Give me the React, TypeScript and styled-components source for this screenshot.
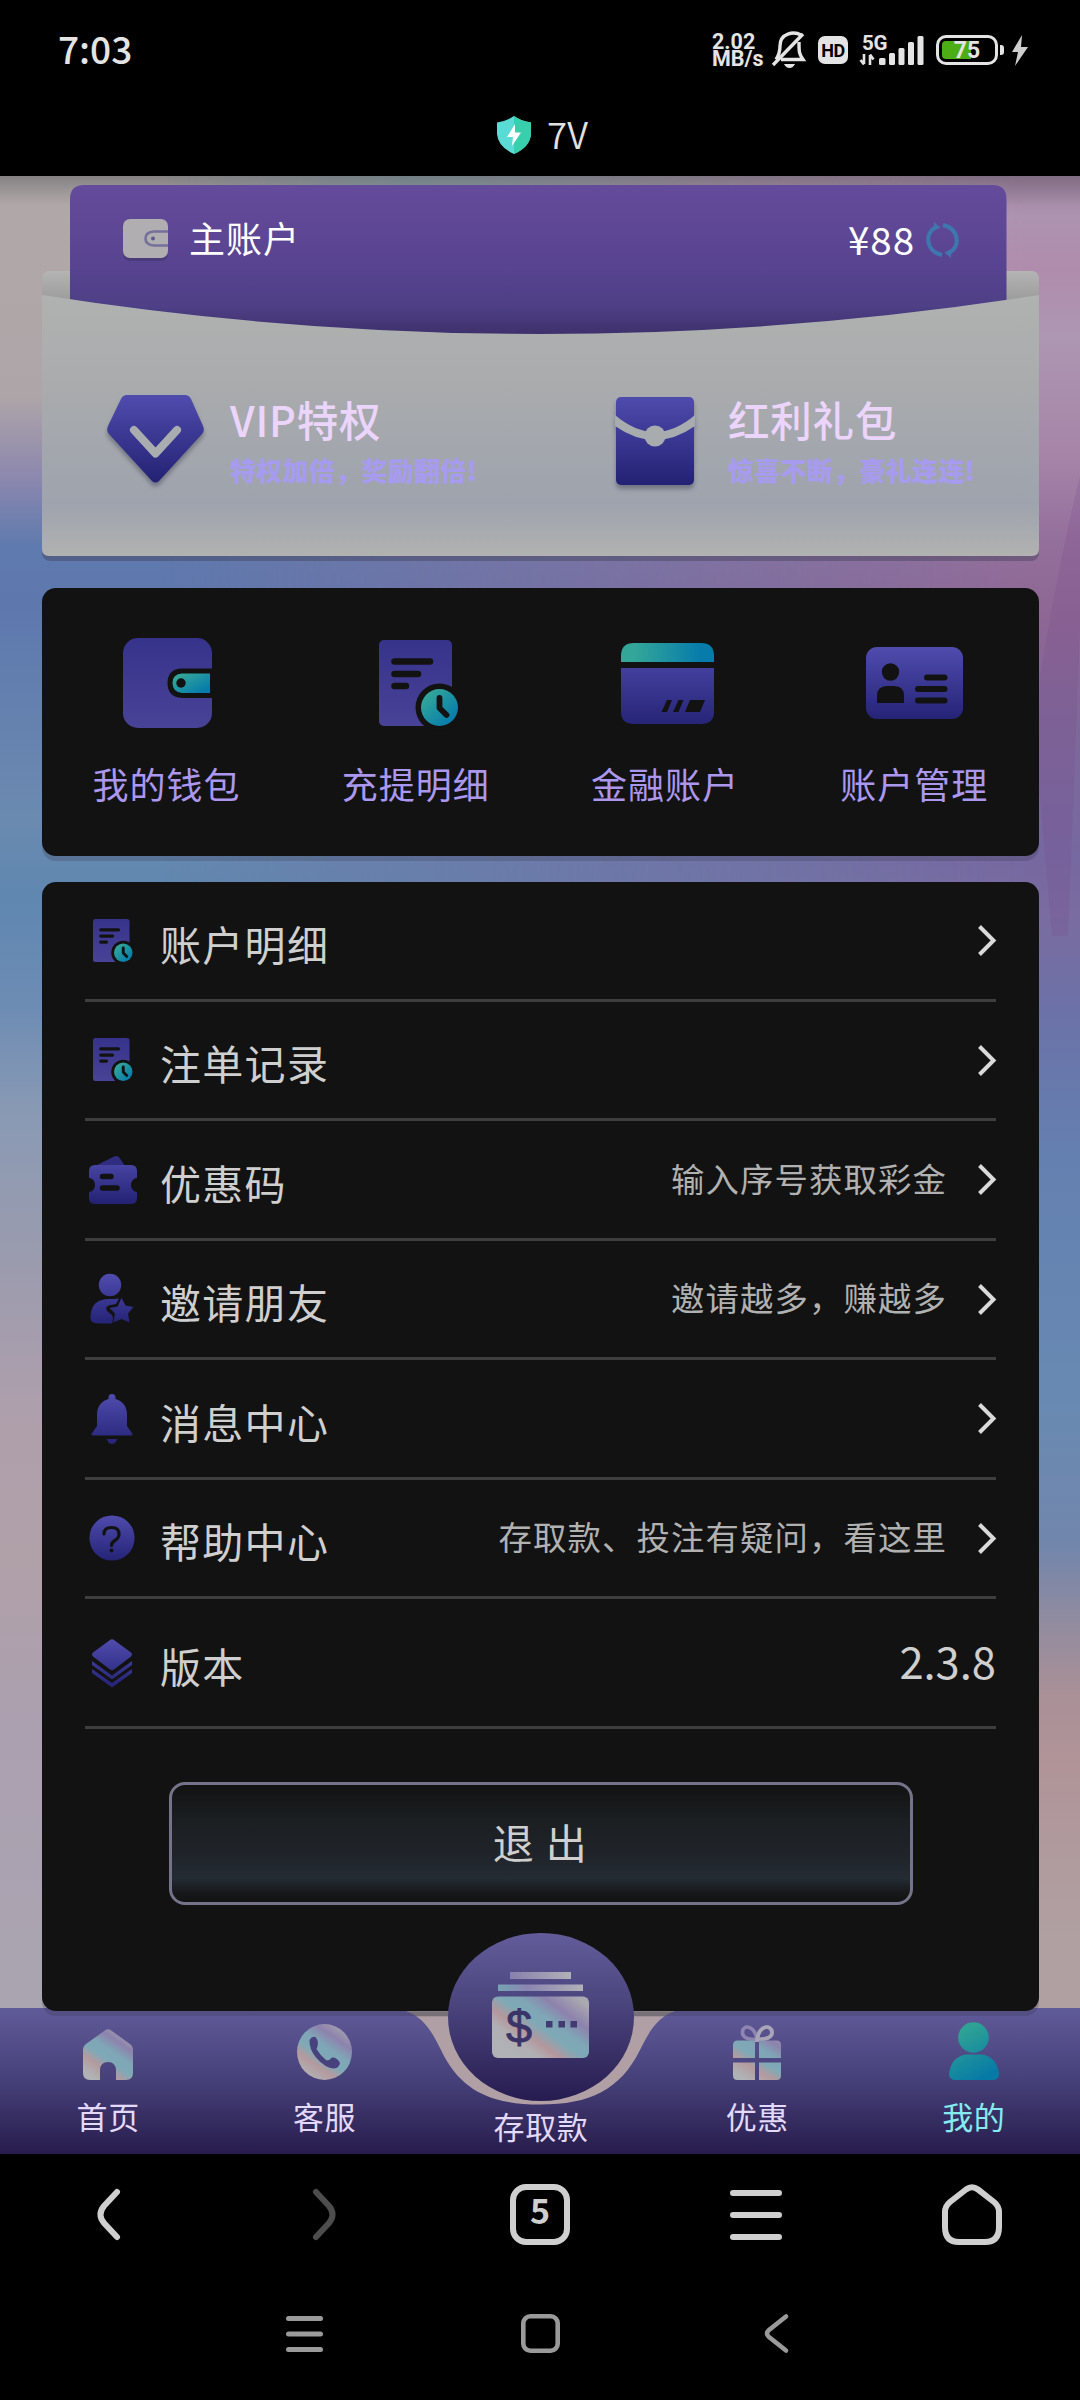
import React from "react";
import styled, { createGlobalStyle, css } from "styled-components";

const INK = "#121212";

const GlobalStyle = createGlobalStyle`
  * { box-sizing: border-box; }
  html, body { margin: 0; padding: 0; background: #000; }
  body { font-family: "Noto Sans CJK SC", "Noto Sans", sans-serif; }
  svg { display: block; flex: none; overflow: visible; }
`;

const Screen = styled.div`
  width: 1080px;
  height: 2400px;
  display: flex;
  flex-direction: column;
  background: #000;
  color: #e4e4e4;
  overflow: hidden;
`;

/* ---------- system status bar ---------- */

const StatusBar = styled.header`
  height: 100px;
  padding: 0 52px 0 58px;
  display: flex;
  align-items: center;
  justify-content: space-between;
`;

const Clock = styled.span`
  font-size: 37px;
  line-height: 50px;
  font-weight: 500;
  padding-bottom: 5px;
`;

const StatusIcons = styled.div`
  display: flex;
  align-items: center;
`;

const Speed = styled.div`
  display: flex;
  flex-direction: column;
  width: 60px;
  font-family: Roboto, sans-serif;
  font-size: 21.5px;
  line-height: 17.5px;
  font-weight: 700;
`;

const HdBadge = styled.span`
  width: 30px;
  height: 28px;
  margin: 0 12px;
  border-radius: 7px;
  background: #e4e4e4;
  color: #000;
  font-family: Roboto, sans-serif;
  font-size: 18px;
  font-weight: 700;
  letter-spacing: -0.5px;
  display: flex;
  align-items: center;
  justify-content: center;
`;

const Signal = styled.div`
  display: grid;
  width: 64px;
  margin-right: 12px;
  > * { grid-area: 1 / 1; }
`;

const Network = styled.span`
  font-family: Roboto, sans-serif;
  font-size: 20.5px;
  line-height: 16px;
  font-weight: 700;
  letter-spacing: -0.3px;
  padding-left: 2px;
`;

const Battery = styled.div`
  width: 62px;
  height: 30px;
  border: 3px solid #e4e4e4;
  border-radius: 10px;
  padding: 3px;
  background: #000;
`;

const Charge = styled.div<{ $level: number }>`
  height: 100%;
  border-radius: 4px;
  background: linear-gradient(90deg, #4cae14 ${(p) => p.$level}%, transparent ${(p) => p.$level}%);
  font-family: Roboto, sans-serif;
  font-size: 23px;
  line-height: 19px;
  font-weight: 700;
  text-align: center;
`;

const BatteryTip = styled.i`
  width: 4px;
  height: 10px;
  margin: 0 7px 0 2px;
  border-radius: 0 3px 3px 0;
  background: #e4e4e4;
`;

const AddressBar = styled.div`
  height: 76px;
  display: flex;
  justify-content: center;
  gap: 16px;
  padding: 16px 0 0 5px;
`;

const SiteName = styled.span`
  font-size: 36.5px;
  line-height: 36px;
  font-weight: 350;
  color: #e2e2e2;
`;

/* ---------- web page ---------- */

const Page = styled.main`
  position: relative;
  height: 1978px;
  padding: 9px 41px 0 42px;
  isolation: isolate;
  overflow: hidden;
  background: linear-gradient(
    #a5a09e 0, #b0a8a8 20px, #aea5a8 220px, #8d88ae 300px, #5f7aae 370px, #5e78ae 430px,
    #6b8ab0 640px, #5f87b0 720px, #6d8cb4 830px, #8a9ab4 940px, #9a9bae 1080px,
    #ae9fac 1230px, #b0a0a8 1380px, #aba0b0 1560px, #aaa5b0 1860px, #a9a5b0 100%
  );
  &::before {
    content: "";
    position: absolute;
    inset: 0;
    z-index: -2;
    background: linear-gradient(
      #9d819d 0, #ad93b0 40px, #b08cac 95px, #ad97b2 160px, #a684a8 280px, #94709c 360px,
      #8e6794 440px, #7f6899 540px, #7668a0 680px, #7a6ca0 740px, #6b72a8 840px,
      #6480b0 980px, #688ab2 1220px, #7286ac 1370px, #8f8ba0 1440px, #aa9097 1520px,
      #b09498 1590px, #b0a0a2 1760px, #b0a0a2 100%
    );
    mask-image: linear-gradient(90deg, transparent 15%, #000 95%);
  }
  &::after {
    content: "";
    position: absolute;
    inset: 0 0 auto;
    height: 30px;
    z-index: -2;
    background: linear-gradient(rgba(60, 60, 70, 0.3), rgba(60, 60, 70, 0)),
      linear-gradient(90deg, transparent 15%, rgba(110, 160, 160, 0.5) 38%, transparent 70%);
  }
`;

const RightFacets = styled.svg`
  position: absolute;
  right: 0;
  top: 300px;
  z-index: -1;
`;

const panel = css`
  border-radius: 14px;
  background: ${INK};
  box-shadow: 0 5px 0 rgba(50, 50, 70, 0.25);
`;

const Wallet = styled.section`
  position: relative;
  height: 371px;
  display: flex;
  flex-direction: column;
`;

const EnvelopeArt = styled.svg`
  position: absolute;
  inset: 0;
  z-index: -1;
`;

const Account = styled.div`
  height: 72px;
  margin: 19px 80px 0 81px;
  display: flex;
  align-items: center;
`;

const AccountName = styled.span`
  margin: 0 auto 0 21px;
  padding-bottom: 7px;
  font-size: 36px;
  line-height: 46px;
  font-weight: 400;
  letter-spacing: 1px;
  color: #fff;
`;

const Balance = styled.span`
  margin-right: 11px;
  padding-bottom: 4px;
  font-size: 38.5px;
  line-height: 46px;
  letter-spacing: 1px;
  color: #fff;
`;

const Perks = styled.div`
  display: grid;
  grid-template-columns: 498px 1fr;
  margin-top: 113px;
`;

const Perk = styled.div`
  display: flex;
  padding-left: 65px;
`;

const PerkIcon = styled.div<{ $shift?: number }>`
  width: 97px;
  height: 96px;
  margin: 6px 26px 0 0;
  padding-left: ${(p) => p.$shift || 0}px;
  display: flex;
  justify-content: center;
  filter: drop-shadow(0 4px 2px rgba(60, 60, 80, 0.45));
`;

const PerkTitle = styled.div`
  font-size: 41.5px;
  line-height: 60px;
  font-weight: 500;
  letter-spacing: 0.8px;
  color: #ecd5fb;
`;

const PerkNote = styled.div`
  font-size: 26px;
  line-height: 36px;
  font-weight: 900;
  letter-spacing: 0.3px;
  white-space: nowrap;
  color: #a79bef;
  margin-top: 3px;
`;

const Shortcuts = styled.nav`
  ${panel}
  height: 268px;
  margin-top: 32px;
  display: grid;
  grid-template-columns: repeat(4, 1fr);
`;

const Shortcut = styled.a`
  display: flex;
  flex-direction: column;
  align-items: center;
  color: #ab98ee;
  font-size: 36px;
  line-height: 50px;
  letter-spacing: 1px;
  white-space: nowrap;
`;

const ShortcutIcon = styled.div<{ $shift: number }>`
  height: 170px;
  padding: 20px 0 0 ${(p) => p.$shift}px;
  display: flex;
  align-items: center;
`;

const MenuPanel = styled.section`
  ${panel}
  height: 1129px;
  margin-top: 26px;
  padding: 0 43px;
  display: flex;
  flex-direction: column;
  align-items: center;
`;

const MenuRow = styled.div<{ $height: number }>`
  width: 100%;
  height: ${(p) => p.$height}px;
  border-bottom: 3px solid #3e3e3e;
  display: flex;
  align-items: center;
`;

const MenuIcon = styled.div<{ $shift?: number }>`
  width: 54px;
  margin-right: 21px;
  padding-left: ${(p) => p.$shift || 0}px;
  display: flex;
  justify-content: center;
`;

const MenuLabel = styled.span`
  margin-right: auto;
  padding-top: 4px;
  font-size: 41px;
  line-height: 60px;
  letter-spacing: 1.3px;
  color: #cfcfcf;
`;

const MenuHint = styled.span`
  margin-right: 31px;
  padding-bottom: 4px;
  font-size: 33.4px;
  line-height: 50px;
  letter-spacing: 1.1px;
  color: #b1b1b1;
`;

const Version = styled.span`
  font-size: 43.5px;
  line-height: 60px;
  padding-bottom: 3px;
  color: #cfcfcf;
`;

const LogoutButton = styled.button`
  width: 744px;
  height: 123px;
  margin-top: 53px;
  padding: 0 0 5px;
  border: 3px solid #747389;
  border-radius: 16px;
  background: linear-gradient(#121212 0%, #1b1f22 30%, #20242a 60%, #232b33 80%, #17181a 92%, #121212 100%);
  font: 400 41px/60px "Noto Sans CJK SC", sans-serif;
  letter-spacing: 1.5px;
  color: #cfcfcf;
`;

/* ---------- site tab bar ---------- */

const TabBar = styled.nav`
  position: absolute;
  left: 0;
  right: 0;
  bottom: 0;
  height: 146px;
  display: grid;
  grid-template-columns: repeat(5, 216.4px);
`;

const TabBackdrop = styled.svg`
  position: absolute;
  left: 0;
  bottom: 0;
  z-index: -1;
`;

const Tab = styled.a<{ $active?: boolean }>`
  display: flex;
  flex-direction: column;
  align-items: center;
  font-size: 31px;
  line-height: 44px;
  letter-spacing: 0.6px;
  color: ${(p) => (p.$active ? "#86ebee" : "#e2d9fb")};
`;

const TabIcon = styled.div`
  height: 86px;
  padding-bottom: 14px;
  display: flex;
  align-items: flex-end;
`;

const CenterLabel = styled.span`
  margin-top: 96px;
`;

const DepositBadge = styled.div`
  position: absolute;
  left: 448px;
  top: -75px;
  width: 186px;
  height: 168px;
  border-radius: 50%;
  background: linear-gradient(#625c9a, #4c467f 40%, #271c50);
  display: flex;
  justify-content: center;
  padding: 39px 1px 0 0;
`;

/* ---------- browser + system navigation ---------- */

const BrowserBar = styled.nav`
  height: 121px;
  display: grid;
  grid-template-columns: repeat(5, 216px);
  place-items: center;
  color: #cfcfcf;
`;

const TabCount = styled.span`
  width: 60px;
  height: 61px;
  border: 6px solid currentColor;
  border-radius: 16px;
  display: flex;
  align-items: center;
  justify-content: center;
  padding-bottom: 9px;
  font-size: 34px;
  font-weight: 700;
  line-height: 38px;
`;

const SystemNav = styled.nav`
  flex: 1;
  display: grid;
  grid-template-columns: repeat(3, 236px);
  justify-content: center;
  place-items: center;
  padding-bottom: 8px;
  color: #9a9a9a;
`;

/* ---------- icons ---------- */

const Violet = ({ id, h }: { id: string; h: number }) => (
  <linearGradient id={id} gradientUnits="userSpaceOnUse" x1="0" y1="0" x2="0" y2={h}>
    <stop offset="0" stopColor="#4f4cae" />
    <stop offset="1" stopColor="#232173" />
  </linearGradient>
);

const Dusk = ({ id, h }: { id: string; h: number }) => (
  <linearGradient id={id} gradientUnits="userSpaceOnUse" x1="0" y1="0" x2="0" y2={h}>
    <stop offset="0" stopColor="#36338b" />
    <stop offset="1" stopColor="#494397" />
  </linearGradient>
);

const Teal = ({ id, flat }: { id: string; flat?: boolean }) => (
  <linearGradient id={id} x1="0" y1="0" x2="1" y2={flat ? 0 : 1}>
    <stop offset="0.15" stopColor="#33a699" />
    <stop offset="0.85" stopColor="#077cab" />
  </linearGradient>
);

const Holo = ({ id, w, h }: { id: string; w: number; h: number }) => (
  <linearGradient id={id} gradientUnits="userSpaceOnUse" x1={w * 0.15} y1={h} x2={w * 0.85} y2="0">
    <stop offset="0.06" stopColor="#b0b2b5" />
    <stop offset="0.27" stopColor="#b49a9f" />
    <stop offset="0.42" stopColor="#7fa9b6" />
    <stop offset="0.58" stopColor="#7fa6b6" />
    <stop offset="0.76" stopColor="#8d82ad" />
    <stop offset="0.95" stopColor="#a5a3ae" />
  </linearGradient>
);

const BellOff = () => (
  <svg width="34" height="36" viewBox="0 0 34 36" fill="none" stroke="#e4e4e4" strokeWidth="3.4">
    <path d="M29 3 C22 -1 8 1 8 14 C8 20 7 23 4 27.500" />
    <path d="M9 27.500 H31 C27 22 27 20 27 10" />
    <path d="M1 33 L31 2" />
    <path d="M12 32 H23 Q21 36 17.500 36 T12 32Z" fill="#e4e4e4" stroke="none" />
  </svg>
);

const SignalBars = () => (
  <svg width="64" height="30" viewBox="0 0 64 30" fill="#e4e4e4">
    <path d="M4 19 V29 M0.500 25 L4 29.500 M10 30 V20 M13.500 24.500 L10 19.500" stroke="#e4e4e4" strokeWidth="2.600" fill="none" />
    <rect x="19" y="23" width="6.500" height="7" rx="1.500" />
    <rect x="29" y="18" width="6" height="12" rx="1.500" />
    <rect x="38.500" y="13" width="6" height="17" rx="1.500" />
    <rect x="48" y="7" width="6" height="23" rx="1.500" />
    <rect x="57.500" y="1" width="6" height="29" rx="1.500" />
  </svg>
);

const Bolt = () => (
  <svg width="17" height="31" viewBox="0 0 17 31">
    <path d="M11 0 L1 17 H7 L4 31 L17 12 H10 Z" fill="#cfcfcf" />
  </svg>
);

const Shield = () => (
  <svg width="34" height="38" viewBox="0 0 34 38">
    <path d="M17 0 Q24 5 34 6.500 V18 Q33 31 17 38 Q1 31 0 18 V6.500 Q10 5 17 0Z" fill="#5adbd6" />
    <path d="M17 0 Q24 5 34 6.500 V18 Q33 31 17 38Z" fill="#38cfac" />
    <path d="M18 8 L10 21 H16 L15 30 L24 16.500 H18 Z" fill="#fff" />
  </svg>
);

const PurseIcon = () => (
  <svg width="45" height="42" viewBox="0 0 45 42">
    <rect y="3" width="45" height="39" rx="7" fill="#4a3c79" />
    <rect width="45" height="39" rx="7" fill="#b1aeb1" />
    <path d="M45 12.500 H31 Q22.500 13 22.500 19.500 T31 26.500 H45" fill="none" stroke="#75709a" strokeWidth="2.600" />
    <circle cx="30" cy="19.500" r="2" fill="#615a88" />
  </svg>
);

const RefreshIcon = () => (
  <svg width="33" height="36" viewBox="0 0 33 36" fill="none" stroke="#3f76ad" strokeWidth="4">
    <path d="M9 5.500 C-1 11 -1 29 16 33" />
    <path d="M24 30.500 C34 25 34 7 17 3" />
    <path d="M8 0 L14.500 5.500 L8 9Z M25 36 L18.500 30.500 L25 27Z" fill="#3f76ad" stroke="none" />
  </svg>
);

const VipIcon = () => (
  <svg width="97" height="88" viewBox="0 0 97 88">
    <defs><Violet id="vip" h={88} /></defs>
    <path d="M20 0 H78 Q82 0 84 4 L96 31 Q98 36 95 39 L52 86 Q48.500 89 45 86 L2 39 Q-1 36 1 31 L14 4 Q16 0 20 0Z" fill="url(#vip)" />
    <path d="M27 35 L48.500 58.500 L70 35" fill="none" stroke="#aaadaf" strokeWidth="8" strokeLinecap="round" strokeLinejoin="round" />
  </svg>
);

const PacketIcon = () => (
  <svg width="78" height="90" viewBox="0 0 78 90">
    <defs><Violet id="packet" h={90} /></defs>
    <rect y="2" width="78" height="88" rx="5" fill="url(#packet)" />
    <path d="M-1 20 Q39 54 79 20 V31 Q39 59 -1 31Z" fill="#a9acae" />
    <circle cx="39" cy="41" r="10.500" fill="#a9acae" />
  </svg>
);

const WalletIcon = () => (
  <svg width="89" height="90" viewBox="0 0 89 90">
    <defs><Dusk id="wal" h={90} /><Teal id="walTeal" /></defs>
    <rect width="89" height="90" rx="15" fill="url(#wal)" />
    <path d="M90 30.500 H59 Q44.500 31 44.500 45 T59 60 H90Z" fill={INK} />
    <path d="M87 35.500 H59 Q49.500 36 49.500 45 T59 55 H87Z" fill="url(#walTeal)" />
    <circle cx="58" cy="45" r="4.700" fill={INK} />
  </svg>
);

const StatementIcon = ({ id, scale = 1 }: { id: string; scale?: number }) => (
  <svg width={80 * scale} height={87 * scale} viewBox="0 0 80 87">
    <defs><Dusk id={id} h={87} /><Teal id={id + "Teal"} /></defs>
    <rect width="73" height="86" rx="5" fill={`url(#${id})`} />
    <path d="M15.500 21.500 H51 M15.500 34 H39 M15.500 46 H27" stroke={INK} strokeWidth="6.500" strokeLinecap="round" />
    <circle cx="60.500" cy="67.500" r="24" fill={INK} />
    <circle cx="60.500" cy="67.500" r="18.500" fill={`url(#${id}Teal)`} />
    <path d="M60.500 58 V68 L67.500 75" fill="none" stroke={INK} strokeWidth="5.800" strokeLinecap="round" strokeLinejoin="round" />
  </svg>
);

const CardIcon = () => (
  <svg width="93" height="81" viewBox="0 0 93 81">
    <defs><Violet id="bank" h={88} /><Teal id="bankTeal" flat /></defs>
    <path d="M0 19 V13 Q0 0 13 0 H80 Q93 0 93 13 V19Z" fill="url(#bankTeal)" />
    <path d="M0 25 H93 V69 Q93 81 80 81 H13 Q0 81 0 69Z" fill="url(#bank)" />
    <path d="M46 57 H51 L46 69 H40.500Z M57.500 57 H62.500 L57.500 69 H52Z M69 57 H84 L79 69 H64Z" fill={INK} />
  </svg>
);

const IdIcon = () => (
  <svg width="97" height="72" viewBox="0 0 97 72">
    <defs><Violet id="idc" h={76} /></defs>
    <rect width="97" height="72" rx="11" fill="url(#idc)" />
    <circle cx="24.500" cy="25" r="8.700" fill={INK} />
    <path d="M11 56 V49 Q11 39 21 39 H28 Q38 39 38 49 V56Z" fill={INK} />
    <path d="M61 30.500 H78.500 M52 42 H78.500 M52 53.500 H78.500" stroke={INK} strokeWidth="6" strokeLinecap="round" />
  </svg>
);

const CouponIcon = () => (
  <svg width="48" height="48" viewBox="0 0 48 48">
    <defs><Violet id="cou" h={48} /></defs>
    <path d="M8 9 L25 0.500 Q29 -1 31 2.500 L36 10 Z" fill="#302d80" />
    <path d="M6 9 H42 Q48 9 48 15 V22 C40 23 40 35 48 36 V42 Q48 48 42 48 H6 Q0 48 0 42 V36 C8 35 8 23 0 22 V15 Q0 9 6 9Z" fill="url(#cou)" />
    <path d="M13.500 20.500 H22 M13.500 32 H28" stroke={INK} strokeWidth="5.500" strokeLinecap="round" />
  </svg>
);

const InviteIcon = () => (
  <svg width="44" height="50" viewBox="0 0 44 50">
    <defs><Violet id="inv" h={52} /></defs>
    <circle cx="20" cy="11" r="11.200" fill="url(#inv)" />
    <path d="M19 25 Q1 25 0.500 43 Q0 49.500 8 49.500 H22 Q24 45 22 41 L17 37 Q14 32 21 31 L26 30 L29 24.500 Q24 25 19 25Z" fill="url(#inv)" />
    <path d="M31.500 24 L35.500 31.500 L43.500 33 L38 39.500 L39.500 48.500 L31.500 45 L23.500 48.500 L25 39.500 L19.500 34 L27.500 32.500Z" fill="url(#inv)" strokeLinejoin="round" />
  </svg>
);

const BellIcon = () => (
  <svg width="42" height="50" viewBox="0 0 42 50">
    <defs><Violet id="bell" h={54} /></defs>
    <path d="M17.500 5 Q17 0 21 0 T24.500 5 Q36 8.500 36 21 V32 L41.500 40 Q41.500 41.500 40 41.500 H2 Q0.500 41.500 0.500 40 L6 32 V21 Q6 8.500 17.500 5Z" fill="url(#bell)" />
    <path d="M16 45 H26 Q25 50 21 50 T16 45Z" fill="url(#bell)" />
  </svg>
);

const HelpIcon = () => (
  <svg width="46" height="46" viewBox="0 0 46 46">
    <defs><Violet id="help" h={48} /></defs>
    <circle cx="23" cy="23" r="22.600" fill="url(#help)" />
    <path d="M15 19 Q15 12.500 22.500 12.500 T30 19 Q30 23 26 25.500 Q22.500 27.500 22.500 30.500" fill="none" stroke={INK} strokeWidth="3.200" strokeLinecap="round" />
    <circle cx="22.500" cy="35.500" r="1.900" fill={INK} />
  </svg>
);

const LayersIcon = () => (
  <svg width="40" height="48" viewBox="0 0 40 48">
    <defs><Violet id="lay" h={50} /></defs>
    <path d="M18 1 Q20 -0.500 22 1 L39 13.500 Q41 15.500 39 17.500 L22 30.500 Q20 32 18 30.500 L1 17.500 Q-1 15.500 1 13.500Z" fill="url(#lay)" />
    <path d="M0 22 L20 36.500 L40 22 V26 L20 40.500 L0 26Z" fill="url(#lay)" />
    <path d="M0 30 L20 44 L40 30 V34 L20 48.500 L0 34Z" fill="url(#lay)" />
  </svg>
);

const RowChevron = () => (
  <svg width="18" height="31" viewBox="0 0 18 31">
    <path d="M1.500 1.500 L15.500 15.500 L1.500 29.500" fill="none" stroke="#dadada" strokeWidth="4" />
  </svg>
);

const HomeTabIcon = () => (
  <svg width="50" height="51" viewBox="0 0 50 51">
    <defs><Holo id="homeH" w={50} h={51} /></defs>
    <path d="M22.500 1 Q25 -0.500 27.500 1 L47 15 Q50 17 50 20 V44 Q50 51 43 51 H33 V41 Q32.500 33 25 33 T17 41 V51 H7 Q0 51 0 44 V20 Q0 17 3 15Z" fill="url(#homeH)" />
  </svg>
);

const PhoneTabIcon = () => (
  <svg width="55" height="56" viewBox="0 0 55 56">
    <defs><Holo id="phoneH" w={55} h={56} /></defs>
    <ellipse cx="27.500" cy="28" rx="27.500" ry="28" fill="url(#phoneH)" />
    <path d="M12.500 16 Q15 12 18.500 13 Q21 16 21 19 Q21 22 19.500 25 Q23 31 29 36 Q32 37 35 33.500 Q40 33 43 39 Q42 44 37 44.500 Q28 44 19 33.500 Q12 25 12.500 16Z" fill="#47427d" />
  </svg>
);

const GiftTabIcon = () => (
  <svg width="48" height="55" viewBox="0 0 48 55">
    <defs><Holo id="giftH" w={48} h={55} /></defs>
    <path d="M24 15 C18 14 9 14 9.500 7 C10 -1 22 0 24 15 C26 0 38 -1 39 7 C39.500 14 30 14 24 15Z" fill="none" stroke="#8e86b0" strokeWidth="3.600" />
    <path d="M24 15 C26 0 38 -1 39 7 C39.500 14 30 14 24 15Z" fill="none" stroke="#a9a5b6" strokeWidth="3.600" />
    <path d="M0 33 V20 Q0 15.500 4.500 15.500 H22 V33Z M26 33 V15.500 H43.500 Q48 15.500 48 20 V33Z M0 37.500 H22 V55 H4.500 Q0 55 0 50.500Z M26 37.500 H48 V50.500 Q48 55 43.500 55 H26Z" fill="url(#giftH)" />
  </svg>
);

const UserTabIcon = () => (
  <svg width="50" height="58" viewBox="0 0 50 58">
    <defs>
      <linearGradient id="userG" gradientUnits="userSpaceOnUse" x1="10" y1="4" x2="38" y2="54">
        <stop offset="0.1" stopColor="#2fa295" />
        <stop offset="1" stopColor="#067aa6" />
      </linearGradient>
    </defs>
    <circle cx="24.500" cy="15.500" r="15.300" fill="url(#userG)" />
    <path d="M17 32.500 H33 Q48 35 50 52 Q50 58 43 58 H7 Q0 58 0 52 Q2 35 17 32.500Z" fill="url(#userG)" />
  </svg>
);

const DepositIcon = () => (
  <svg width="97" height="86" viewBox="0 0 97 86">
    <defs>
      <linearGradient id="depA"><stop offset="0" stopColor="#8680ad" /><stop offset="1" stopColor="#b2b0b8" /></linearGradient>
      <linearGradient id="depB"><stop offset="0" stopColor="#75a4b4" /><stop offset="0.35" stopColor="#8b86b2" /><stop offset="1" stopColor="#b2b0b8" /></linearGradient>
      <linearGradient id="depC" gradientUnits="userSpaceOnUse" x1="22" y1="94" x2="77" y2="18">
        <stop offset="0.1" stopColor="#b0b2b5" />
        <stop offset="0.24" stopColor="#b0aeb2" />
        <stop offset="0.36" stopColor="#b4979d" />
        <stop offset="0.5" stopColor="#7fa9b6" />
        <stop offset="0.62" stopColor="#7fa6b6" />
        <stop offset="0.78" stopColor="#8d82ad" />
        <stop offset="0.98" stopColor="#aaa8b0" />
      </linearGradient>
    </defs>
    <rect x="18" y="0" width="61" height="7" fill="url(#depA)" />
    <rect x="6" y="12.500" width="85" height="6.500" fill="url(#depB)" />
    <rect x="0" y="24.500" width="97" height="61.500" rx="6" fill="url(#depC)" />
    <text x="27" y="70.500" textAnchor="middle" fontFamily="Liberation Sans, sans-serif" fontSize="47" fill="#3b3469" stroke="#3b3469" strokeWidth="0.8">$</text>
    <path d="M54 49 h6.500 v6.500 h-6.500Z M66.500 49 h6.500 v6.500 h-6.500Z M78.500 49 h6.500 v6.500 h-6.500Z" fill="#423b72" />
  </svg>
);

const Angle = ({ flip, color }: { flip?: boolean; color?: string }) => (
  <svg width="23" height="51" viewBox="0 0 23 51">
    <path
      d={flip ? "M3 3 L16 17 Q23 25.500 16 34 L3 48" : "M20 3 L7 17 Q0 25.500 7 34 L20 48"}
      fill="none" stroke={color || "currentColor"} strokeWidth="6" strokeLinecap="round"
    />
  </svg>
);

const Burger = ({ w, h, t }: { w: number; h: number; t: number }) => (
  <svg width={w} height={h} viewBox={`0 0 ${w} ${h}`}>
    <path d={`M${t / 2} ${t / 2} H${w - t / 2} M${t / 2} ${h / 2} H${w - t / 2} M${t / 2} ${h - t / 2} H${w - t / 2}`} stroke="currentColor" strokeWidth={t} strokeLinecap="round" />
  </svg>
);

const HomeOutline = () => (
  <svg width="60" height="61" viewBox="0 0 60 61">
    <path d="M24 5.500 Q30 1 36 5.500 L52 18 Q57 22 57 28 V43 Q57 58 43 58 H17 Q3 58 3 43 V28 Q3 22 8 18Z" fill="none" stroke="currentColor" strokeWidth="6" />
  </svg>
);

const RecentSquare = () => (
  <svg width="39" height="39" viewBox="0 0 39 39">
    <rect x="2.300" y="2.300" width="34.400" height="34.400" rx="7" fill="none" stroke="currentColor" strokeWidth="4.600" />
  </svg>
);

const BackThin = () => (
  <svg width="24" height="39" viewBox="0 0 24 39">
    <path d="M22 2.500 L5 16 Q1 19.500 5 23 L22 36.500" fill="none" stroke="currentColor" strokeWidth="4.600" strokeLinecap="round" />
  </svg>
);

/* ---------- content ---------- */

const shortcuts = [
  { label: "我的钱包", icon: <WalletIcon />, shift: 2 },
  { label: "充提明细", icon: <StatementIcon id="stm" />, shift: 7 },
  { label: "金融账户", icon: <CardIcon />, shift: 5 },
  { label: "账户管理", icon: <IdIcon />, shift: 0 },
];

const rows = [
  { label: "账户明细", icon: <StatementIcon id="row1" scale={0.5} />, shift: 2, height: 120 },
  { label: "注单记录", icon: <StatementIcon id="row2" scale={0.5} />, shift: 2, height: 119 },
  { label: "优惠码", icon: <CouponIcon />, shift: 2, hint: "输入序号获取彩金", height: 120 },
  { label: "邀请朋友", icon: <InviteIcon />, shift: 0, hint: "邀请越多，赚越多", height: 119 },
  { label: "消息中心", icon: <BellIcon />, shift: 0, height: 120 },
  { label: "帮助中心", icon: <HelpIcon />, shift: 0, hint: "存取款、投注有疑问，看这里", height: 119 },
];

export default function App() {
  return (
    <Screen>
      <GlobalStyle />
      <StatusBar>
        <Clock>7:03</Clock>
        <StatusIcons>
          <Speed><span>2.02</span><span>MB/s</span></Speed>
          <BellOff />
          <HdBadge>HD</HdBadge>
          <Signal><SignalBars /><Network>5G</Network></Signal>
          <Battery><Charge $level={58}>75</Charge></Battery>
          <BatteryTip />
          <Bolt />
        </StatusIcons>
      </StatusBar>
      <AddressBar>
        <Shield />
        <SiteName>7V</SiteName>
      </AddressBar>

      <Page>
        <RightFacets width="42" height="460" viewBox="0 0 42 460">
          <path d="M42 0 Q22 80 2 200 L0 300 L14 460 H30 L42 150Z" fill="rgba(120,70,140,0.2)" />
        </RightFacets>
        <Wallet>
          <EnvelopeArt width="997" height="378" viewBox="0 0 997 378">
            <defs>
              <linearGradient id="flap" x1="0" y1="0" x2="0" y2="1">
                <stop offset="0" stopColor="#654b9b" />
                <stop offset="0.5" stopColor="#594491" />
                <stop offset="0.8" stopColor="#4e3f86" />
                <stop offset="1" stopColor="#3c2f69" />
              </linearGradient>
              <linearGradient id="front" x1="0" y1="0" x2="0" y2="1">
                <stop offset="0" stopColor="#b0b2b1" />
                <stop offset="0.35" stopColor="#a9abad" />
                <stop offset="0.8" stopColor="#9ea3ad" />
                <stop offset="1" stopColor="#b1b2b1" />
              </linearGradient>
              <linearGradient id="back" gradientUnits="userSpaceOnUse" x1="0" y1="86" x2="0" y2="114">
                <stop offset="0" stopColor="#b4b4b4" />
                <stop offset="1" stopColor="#9d9d9e" />
              </linearGradient>
            </defs>
            <rect y="92" width="997" height="284" rx="8" fill="rgba(60,60,80,0.4)" />
            <rect y="86" width="997" height="100" rx="7" fill="url(#back)" />
            <path d="M28 152 V14 Q28 0 42 0 H950.500 Q964.500 0 964.500 14 V152Z" fill="url(#flap)" />
            <path d="M0 110 Q498 188 997 110 V364 Q997 371 990 371 H7 Q0 371 0 364Z" fill="url(#front)" />
          </EnvelopeArt>
          <Account>
            <PurseIcon />
            <AccountName>主账户</AccountName>
            <Balance>¥88</Balance>
            <RefreshIcon />
          </Account>
          <Perks>
            <Perk>
              <PerkIcon><VipIcon /></PerkIcon>
              <div><PerkTitle>VIP特权</PerkTitle><PerkNote>特权加倍，奖励翻倍!</PerkNote></div>
            </Perk>
            <Perk>
              <PerkIcon $shift={3}><PacketIcon /></PerkIcon>
              <div><PerkTitle>红利礼包</PerkTitle><PerkNote>惊喜不断，豪礼连连!</PerkNote></div>
            </Perk>
          </Perks>
        </Wallet>

        <Shortcuts>
          {shortcuts.map((s) => (
            <Shortcut key={s.label}>
              <ShortcutIcon $shift={s.shift}>{s.icon}</ShortcutIcon>
              {s.label}
            </Shortcut>
          ))}
        </Shortcuts>

        <MenuPanel>
          {rows.map((r) => (
            <MenuRow key={r.label} $height={r.height}>
              <MenuIcon $shift={r.shift}>{r.icon}</MenuIcon>
              <MenuLabel>{r.label}</MenuLabel>
              {r.hint && <MenuHint>{r.hint}</MenuHint>}
              <RowChevron />
            </MenuRow>
          ))}
          <MenuRow $height={130}>
            <MenuIcon><LayersIcon /></MenuIcon>
            <MenuLabel>版本</MenuLabel>
            <Version>2.3.8</Version>
          </MenuRow>
          <LogoutButton>退 出</LogoutButton>
        </MenuPanel>

        <TabBar>
          <TabBackdrop width="1080" height="146" viewBox="0 0 1080 146">
            <defs>
              <linearGradient id="bar" x1="0" y1="0" x2="0" y2="1">
                <stop offset="0" stopColor="#605b99" />
                <stop offset="0.5" stopColor="#464079" />
                <stop offset="1" stopColor="#271c4c" />
              </linearGradient>
            </defs>
            <path d="M380 3.500 H700 V110 H380Z" fill="#b0a0a5" />
            <path d="M380 3.500 H700 V8.500 H380Z" fill="#8e8487" />
            <path d="M0 0 H388 C420 1 430 20 441 42 C460 82 490 96.500 540 96.500 S620 82 640 42 C651 20 661 1 693 0 H1080 V146 H0Z" fill="url(#bar)" />
          </TabBackdrop>
          <Tab><TabIcon><HomeTabIcon /></TabIcon>首页</Tab>
          <Tab><TabIcon><PhoneTabIcon /></TabIcon>客服</Tab>
          <Tab><CenterLabel>存取款</CenterLabel></Tab>
          <Tab><TabIcon><GiftTabIcon /></TabIcon>优惠</Tab>
          <Tab $active><TabIcon><UserTabIcon /></TabIcon>我的</Tab>
          <DepositBadge><DepositIcon /></DepositBadge>
        </TabBar>
      </Page>

      <BrowserBar>
        <Angle />
        <Angle flip color="#4d4d4d" />
        <TabCount>5</TabCount>
        <Burger w={52} h={50} t={6} />
        <HomeOutline />
      </BrowserBar>
      <SystemNav>
        <Burger w={37} h={36} t={5} />
        <RecentSquare />
        <BackThin />
      </SystemNav>
    </Screen>
  );
}
